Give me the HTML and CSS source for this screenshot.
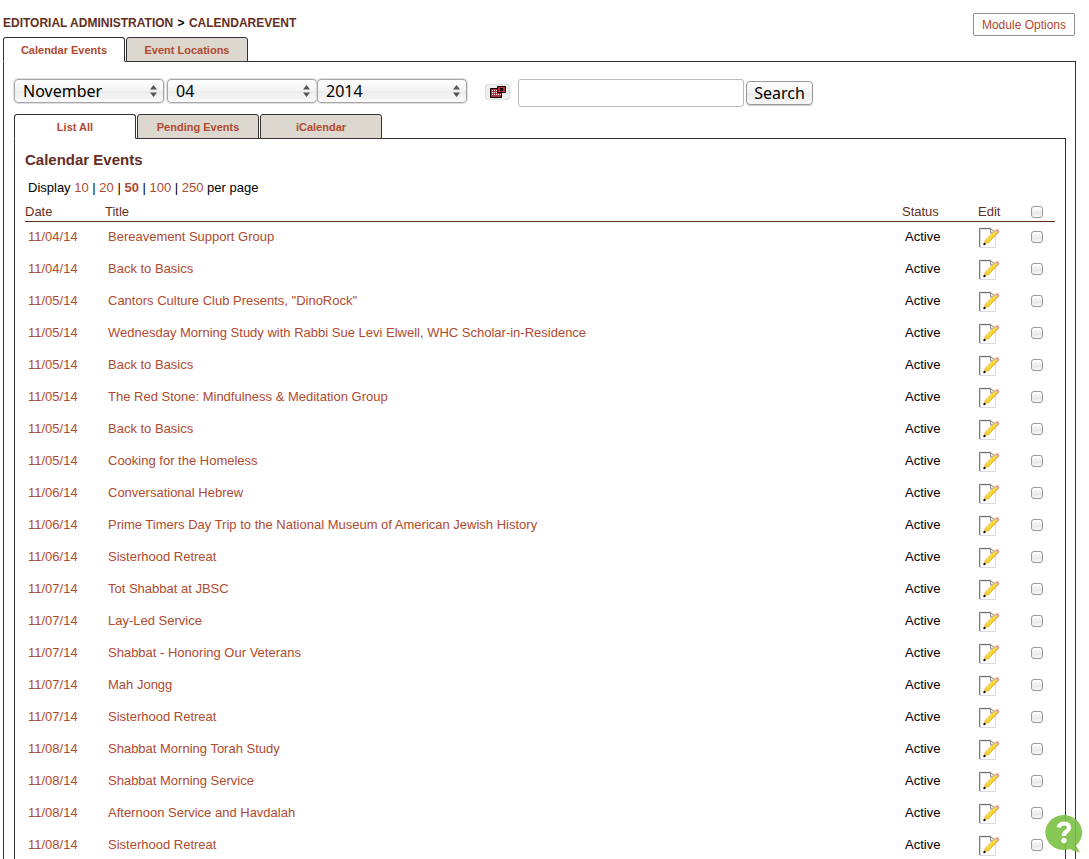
FILE: index.html
```html
<!DOCTYPE html>
<html lang="en">
<head>
<meta charset="utf-8">
<meta name="viewport" content="width=device-width, initial-scale=1">
<title>Editorial Administration - Calendar Events</title>
<link rel="stylesheet" href="styles.css">
</head>
<body>
<svg class="sprite" aria-hidden="true">
  <symbol id="edit" viewBox="0 0 21 21">
    <path d="M.5 1h11l5 5v14.500H.5z" fill="#fff" stroke="#d9d9d9"/>
    <path d="M.5 20V1.500h11" fill="none" stroke="#777"/>
    <path d="M1.500 20V2.500h10" fill="none" stroke="#dcdcdc"/>
    <path d="M11.500 1.500v4.500h5z" fill="#eee" stroke="#888"/>
    <path d="M5 17l1.500-4L16.500 3l2.700 2.700L9 16z" fill="#f8d22c" stroke="#d9a81c" stroke-width=".8"/>
    <path d="M7.500 13.200L16.500 4.200" stroke="#fff08a"/>
    <path d="M16 3.500l1.500-1.300q1.500-.5 2.500 1t0 2.300l-1.200 1.200z" fill="#e5a79d"/>
    <path d="M4.800 17.500l1.200-3 2.300 2z" fill="#f5dfb0"/>
    <circle cx="5.500" cy="17" r="1.200" fill="#111"/>
  </symbol>
</svg>

<div class="page">
  <header class="top">
    <nav class="crumbs" aria-label="Breadcrumb"><a href="#">Editorial Administration</a> <span class="sep">&gt;</span> <a href="#">CalendarEvent</a></nav>
    <button class="options" type="button">Module Options</button>
  </header>

  <nav class="tabs" aria-label="Sections">
    <a class="tab active" href="#">Calendar Events</a>
    <a class="tab" href="#">Event Locations</a>
  </nav>

  <main class="panel outer">
    <form class="filters">
      <div class="pick month"><select aria-label="Month"><option>November</option></select><svg class="arrows" viewBox="0 0 7 12" aria-hidden="true"><path d="M0 4.500L3.500 0 7 4.500zM0 7.500L3.500 12 7 7.500z"/></svg></div>
      <div class="pick"><select aria-label="Day"><option>04</option></select><svg class="arrows" viewBox="0 0 7 12" aria-hidden="true"><path d="M0 4.500L3.500 0 7 4.500zM0 7.500L3.500 12 7 7.500z"/></svg></div>
      <div class="pick"><select aria-label="Year"><option>2014</option></select><svg class="arrows" viewBox="0 0 7 12" aria-hidden="true"><path d="M0 4.500L3.500 0 7 4.500zM0 7.500L3.500 12 7 7.500z"/></svg></div>
      <button class="calendar" type="button" aria-label="Choose a date">
        <svg viewBox="0 0 16 12" width="16" height="12" aria-hidden="true">
          <path d="M.5 2.500h11v9H.5z" fill="#b5303a" stroke="#000"/>
          <path d="M2 4.500h9M2 6.500h9M2 8.500h9" stroke="#fff" stroke-dasharray="1 1"/>
          <path d="M7.500.5h8v6h-8z" fill="#b5303a" stroke="#000"/>
          <path d="M10 2h3v3h-1V4l-1 1h-1V4l1-1h-1z" fill="#000"/>
        </svg>
      </button>
      <input class="query" type="text" aria-label="Search events">
      <button class="search" type="submit">Search</button>
    </form>

    <nav class="tabs" aria-label="Calendar views">
      <a class="tab active" href="#">List All</a>
      <a class="tab" href="#">Pending Events</a>
      <a class="tab" href="#">iCalendar</a>
    </nav>

    <section class="panel inner">
      <h1>Calendar Events</h1>
      <p class="pager">Display <a href="#">10</a> | <a href="#">20</a> | <a class="current" href="#">50</a> | <a href="#">100</a> | <a href="#">250</a> per page</p>
      <table class="events">
        <thead><tr><th class="date">Date</th><th>Title</th><th class="status">Status</th><th class="edit">Edit</th><th class="check"><input type="checkbox" aria-label="Select all events"></th></tr></thead>
        <tbody>
          <tr><td><a href="#">11/04/14</a></td><td><a href="#">Bereavement Support Group</a></td><td>Active</td><td><a href="#" aria-label="Edit"><svg class="icon"><use href="#edit"/></svg></a></td><td><input type="checkbox" aria-label="Select event"></td></tr>
          <tr><td><a href="#">11/04/14</a></td><td><a href="#">Back to Basics</a></td><td>Active</td><td><a href="#" aria-label="Edit"><svg class="icon"><use href="#edit"/></svg></a></td><td><input type="checkbox" aria-label="Select event"></td></tr>
          <tr><td><a href="#">11/05/14</a></td><td><a href="#">Cantors Culture Club Presents, "DinoRock"</a></td><td>Active</td><td><a href="#" aria-label="Edit"><svg class="icon"><use href="#edit"/></svg></a></td><td><input type="checkbox" aria-label="Select event"></td></tr>
          <tr><td><a href="#">11/05/14</a></td><td><a href="#">Wednesday Morning Study with Rabbi Sue Levi Elwell, WHC Scholar-in-Residence</a></td><td>Active</td><td><a href="#" aria-label="Edit"><svg class="icon"><use href="#edit"/></svg></a></td><td><input type="checkbox" aria-label="Select event"></td></tr>
          <tr><td><a href="#">11/05/14</a></td><td><a href="#">Back to Basics</a></td><td>Active</td><td><a href="#" aria-label="Edit"><svg class="icon"><use href="#edit"/></svg></a></td><td><input type="checkbox" aria-label="Select event"></td></tr>
          <tr><td><a href="#">11/05/14</a></td><td><a href="#">The Red Stone: Mindfulness &amp; Meditation Group</a></td><td>Active</td><td><a href="#" aria-label="Edit"><svg class="icon"><use href="#edit"/></svg></a></td><td><input type="checkbox" aria-label="Select event"></td></tr>
          <tr><td><a href="#">11/05/14</a></td><td><a href="#">Back to Basics</a></td><td>Active</td><td><a href="#" aria-label="Edit"><svg class="icon"><use href="#edit"/></svg></a></td><td><input type="checkbox" aria-label="Select event"></td></tr>
          <tr><td><a href="#">11/05/14</a></td><td><a href="#">Cooking for the Homeless</a></td><td>Active</td><td><a href="#" aria-label="Edit"><svg class="icon"><use href="#edit"/></svg></a></td><td><input type="checkbox" aria-label="Select event"></td></tr>
          <tr><td><a href="#">11/06/14</a></td><td><a href="#">Conversational Hebrew</a></td><td>Active</td><td><a href="#" aria-label="Edit"><svg class="icon"><use href="#edit"/></svg></a></td><td><input type="checkbox" aria-label="Select event"></td></tr>
          <tr><td><a href="#">11/06/14</a></td><td><a href="#">Prime Timers Day Trip to the National Museum of American Jewish History</a></td><td>Active</td><td><a href="#" aria-label="Edit"><svg class="icon"><use href="#edit"/></svg></a></td><td><input type="checkbox" aria-label="Select event"></td></tr>
          <tr><td><a href="#">11/06/14</a></td><td><a href="#">Sisterhood Retreat</a></td><td>Active</td><td><a href="#" aria-label="Edit"><svg class="icon"><use href="#edit"/></svg></a></td><td><input type="checkbox" aria-label="Select event"></td></tr>
          <tr><td><a href="#">11/07/14</a></td><td><a href="#">Tot Shabbat at JBSC</a></td><td>Active</td><td><a href="#" aria-label="Edit"><svg class="icon"><use href="#edit"/></svg></a></td><td><input type="checkbox" aria-label="Select event"></td></tr>
          <tr><td><a href="#">11/07/14</a></td><td><a href="#">Lay-Led Service</a></td><td>Active</td><td><a href="#" aria-label="Edit"><svg class="icon"><use href="#edit"/></svg></a></td><td><input type="checkbox" aria-label="Select event"></td></tr>
          <tr><td><a href="#">11/07/14</a></td><td><a href="#">Shabbat - Honoring Our Veterans</a></td><td>Active</td><td><a href="#" aria-label="Edit"><svg class="icon"><use href="#edit"/></svg></a></td><td><input type="checkbox" aria-label="Select event"></td></tr>
          <tr><td><a href="#">11/07/14</a></td><td><a href="#">Mah Jongg</a></td><td>Active</td><td><a href="#" aria-label="Edit"><svg class="icon"><use href="#edit"/></svg></a></td><td><input type="checkbox" aria-label="Select event"></td></tr>
          <tr><td><a href="#">11/07/14</a></td><td><a href="#">Sisterhood Retreat</a></td><td>Active</td><td><a href="#" aria-label="Edit"><svg class="icon"><use href="#edit"/></svg></a></td><td><input type="checkbox" aria-label="Select event"></td></tr>
          <tr><td><a href="#">11/08/14</a></td><td><a href="#">Shabbat Morning Torah Study</a></td><td>Active</td><td><a href="#" aria-label="Edit"><svg class="icon"><use href="#edit"/></svg></a></td><td><input type="checkbox" aria-label="Select event"></td></tr>
          <tr><td><a href="#">11/08/14</a></td><td><a href="#">Shabbat Morning Service</a></td><td>Active</td><td><a href="#" aria-label="Edit"><svg class="icon"><use href="#edit"/></svg></a></td><td><input type="checkbox" aria-label="Select event"></td></tr>
          <tr><td><a href="#">11/08/14</a></td><td><a href="#">Afternoon Service and Havdalah</a></td><td>Active</td><td><a href="#" aria-label="Edit"><svg class="icon"><use href="#edit"/></svg></a></td><td><input type="checkbox" aria-label="Select event"></td></tr>
          <tr><td><a href="#">11/08/14</a></td><td><a href="#">Sisterhood Retreat</a></td><td>Active</td><td><a href="#" aria-label="Edit"><svg class="icon"><use href="#edit"/></svg></a></td><td><input type="checkbox" aria-label="Select event"></td></tr>
        </tbody>
      </table>
    </section>
  </main>
</div>

<button class="help" type="button" aria-label="Help">
  <svg viewBox="0 0 38 38" width="38" height="38" aria-hidden="true">
    <path d="M18.500 0a18.500 17.500 0 0 1 12.500 30.500q2 4 4 7-6-.5-10-3.500A18.500 17.500 0 1 1 18.500 0z" fill="#7bc043" fill-opacity=".9"/>
    <path d="M13.500 12.500q1-4 5.500-4 5 0 5 4 0 2.500-3 4.300-2 1.200-2 4.200" fill="none" stroke="#fff" stroke-width="4.200"/>
    <circle cx="19" cy="25.500" r="2.700" fill="#fff"/>
  </svg>
</button>
</body>
</html>
```

FILE: styles.css
```css
* { box-sizing: border-box; }
html { scrollbar-width: none; }
body {
  margin: 0;
  background: #fff;
  color: #000;
  font: 13px/16px "Liberation Sans", Arial, sans-serif;
}
a { color: #b14a2e; text-decoration: none; }
a:hover { text-decoration: underline; }
button { cursor: pointer; }
.sprite { display: none; }
.page { padding: 13px 13px 0 3px; }

.top { display: flex; justify-content: space-between; height: 24px; }
.crumbs { padding-top: 2px; font-size: 12px; font-weight: bold; text-transform: uppercase; }
.crumbs a { color: #632e22; }
.sep { margin: 0 1px; }
.options {
  height: 23px;
  margin-right: 1px;
  padding: 0 8px;
  border: 1px solid #8f8f8f;
  border-radius: 2px;
  background: #fff;
  color: #b14a2e;
  font: 12px "Liberation Sans", Arial, sans-serif;
}

.tabs { display: flex; gap: 1px; margin-bottom: -1px; }
.tab {
  position: relative;
  width: 122px;
  height: 25px;
  border: 1px solid #333;
  border-radius: 3px 3px 0 0;
  background: #dcd7cf;
  font-size: 11px;
  font-weight: bold;
  line-height: 24px;
  text-align: center;
}
.tab.active { border-bottom-color: #fff; background: #fff; }
.panel { border: 1px solid #333; border-bottom: 0; }
.outer { padding: 17px 9px 0 10px; }
.inner { padding: 12px 10px 0; }

.filters { display: flex; align-items: flex-start; height: 35px; }
.pick { position: relative; width: 150px; height: 24px; }
.pick.month { margin-right: 3px; }
.pick select {
  width: 100%;
  height: 24px;
  padding: 0 8px;
  appearance: none;
  border: 1px solid #a6a6a6;
  border-radius: 4px;
  background: linear-gradient(#fff, #f3f3f3 50%, #ebebeb 50%, #fbfbfb);
  box-shadow: 0 0 1px 1px #ddd;
  color: #000;
  font: 16px "Noto Sans", sans-serif;
}
.arrows { position: absolute; top: 6px; right: 7px; width: 7px; height: 12px; fill: #555; pointer-events: none; }
.calendar {
  width: 25px;
  height: 16px;
  margin: 5px 8px 0 18px;
  padding: 1px 3px 1px 4px;
  border: 1px solid #ddd;
  border-radius: 2px;
  background: #eee;
}
.calendar svg { display: block; }
.query { width: 226px; height: 28px; border: 1px solid #bbb; border-radius: 3px; }
.search {
  width: 67px;
  height: 24px;
  margin: 2px 0 0 2px;
  padding: 0;
  border: 1px solid #999;
  border-radius: 4px;
  background: linear-gradient(#fff, #f3f3f3 50%, #ebebeb 50%, #f7f7f7);
  box-shadow: 0 1px 1px #ccc;
  color: #000;
  font: 16px/20px "Noto Sans", sans-serif;
}

h1 { margin: 0; color: #632e22; font-size: 15px; line-height: 18px; }
.pager { margin: 11px 3px 8px; }
.pager .current { font-weight: bold; }
.events { width: 100%; border-collapse: separate; border-spacing: 0; table-layout: fixed; }
th { height: 18px; padding: 0; border-bottom: 1px solid #632e22; color: #632e22; font-weight: normal; text-align: left; vertical-align: top; }
th.check { padding-left: 3px; }
td { height: 32px; padding: 7px 3px 0; vertical-align: top; }
td:nth-child(4) { padding: 5px 1px 0; }
.date { width: 80px; }
.status { width: 76px; }
.edit { width: 50px; }
.check { width: 27px; }
.icon { display: block; width: 21px; height: 21px; }
input[type="checkbox"] {
  display: block;
  width: 12px;
  height: 12px;
  margin: 2px 0 0;
  appearance: none;
  border: 1px solid #999;
  border-radius: 3px;
  background: linear-gradient(#fff, #e9e9e9 60%, #f8f8f8);
}
input[type="checkbox"]:checked { background: #b14a2e; }

.help { position: fixed; right: 6px; bottom: 6px; width: 38px; height: 38px; padding: 0; border: 0; background: none; }
.help svg { display: block; }
```
